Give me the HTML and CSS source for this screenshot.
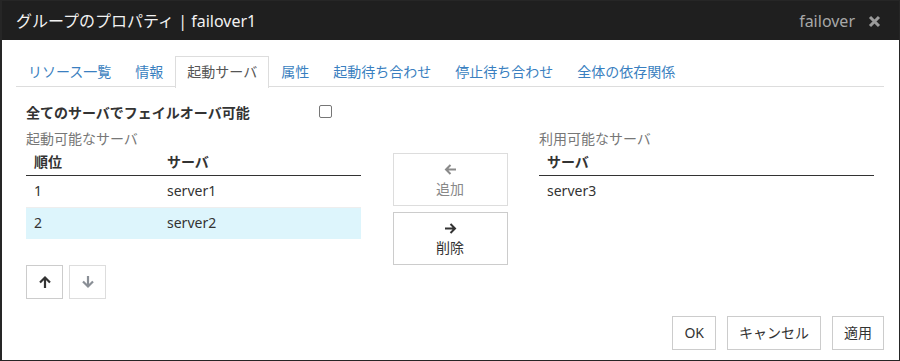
FILE: index.html
```html
<!DOCTYPE html>
<html lang="ja">
<head>
<meta charset="utf-8">
<link rel="stylesheet" href="styles.css">
</head>
<body>
<div class="dialog">
  <div class="titlebar">
    <span class="title">グループのプロパティ | failover1</span>
    <span class="title-right">
      <span class="grp">failover</span>
      <svg class="close" width="13" height="13" viewBox="0 0 13 13"><path d="M2 2 L11 11 M11 2 L2 11" stroke="#9a9a9a" stroke-width="3" stroke-linecap="butt"/></svg>
    </span>
  </div>
  <div class="body">
    <ul class="tabs">
      <li class="tab">リソース一覧</li>
      <li class="tab">情報</li>
      <li class="tab active">起動サーバ</li>
      <li class="tab">属性</li>
      <li class="tab">起動待ち合わせ</li>
      <li class="tab">停止待ち合わせ</li>
      <li class="tab">全体の依存関係</li>
    </ul>
    <div class="content">
      <div class="checkrow">
        <span class="checklabel">全てのサーバでフェイルオーバ可能</span>
        <span class="checkbox"></span>
      </div>
      <div class="cols">
        <div class="col-side">
          <div class="caption">起動可能なサーバ</div>
          <table class="grid">
            <thead>
              <tr><th class="c-order">順位</th><th>サーバ</th></tr>
            </thead>
            <tbody>
              <tr><td class="c-order">1</td><td>server1</td></tr>
              <tr class="selected"><td class="c-order">2</td><td>server2</td></tr>
            </tbody>
          </table>
          <div class="updown">
            <button class="sq">
              <svg width="14" height="14" viewBox="0 0 14 14"><path d="M7 13 V2.5 M2 7.5 L7 2.5 L12 7.5" fill="none" stroke="#333" stroke-width="2.2"/></svg>
            </button>
            <button class="sq disabled">
              <svg width="14" height="14" viewBox="0 0 14 14"><path d="M7 1 V11.5 M2 6.5 L7 11.5 L12 6.5" fill="none" stroke="#8a8f96" stroke-width="2.2"/></svg>
            </button>
          </div>
        </div>
        <div class="col-mid">
          <button class="move disabled">
            <svg width="13" height="13" viewBox="0 0 13 13"><path d="M12 6.5 H2 M6.5 2 L2 6.5 L6.5 11" fill="none" stroke="#8a8a8a" stroke-width="2"/></svg>
            <span>追加</span>
          </button>
          <button class="move">
            <svg width="13" height="13" viewBox="0 0 13 13"><path d="M1 6.5 H11 M6.5 2 L11 6.5 L6.5 11" fill="none" stroke="#333" stroke-width="2"/></svg>
            <span>削除</span>
          </button>
        </div>
        <div class="col-side">
          <div class="caption">利用可能なサーバ</div>
          <table class="grid">
            <thead>
              <tr><th>サーバ</th></tr>
            </thead>
            <tbody>
              <tr><td>server3</td></tr>
            </tbody>
          </table>
        </div>
      </div>
    </div>
    <div class="footer">
      <button class="btn">OK</button>
      <button class="btn">キャンセル</button>
      <button class="btn">適用</button>
    </div>
  </div>
</div>
</body>
</html>
```

FILE: styles.css
```css
* { box-sizing: border-box; }
html, body { margin: 0; padding: 0; background: #fff; }
body {
  font-family: "Noto Sans", "Noto Sans CJK JP", sans-serif;
  font-size: 14px;
  color: #333;
}
.dialog {
  width: 900px;
  height: 361px;
  border: 1px solid #262626;
  border-left-width: 2px;
  display: flex;
  flex-direction: column;
  background: #fff;
}
.titlebar {
  height: 39px;
  background: #1f1f1f;
  display: flex;
  align-items: center;
  justify-content: space-between;
  padding: 0 18px 0 14px;
  color: #f2f2f2;
  font-size: 16px;
  line-height: 20px;
}
.title-right { display: flex; align-items: center; gap: 13px; }
.grp { color: #a8a8a8; font-size: 16px; }
.close { display: block; margin-top: 1px; }
.body {
  flex: 1;
  display: flex;
  flex-direction: column;
  padding: 16px 15px 10px 14px;
}
.tabs {
  list-style: none;
  margin: 0;
  padding: 0;
  display: flex;
  border-bottom: 1px solid #dddddd;
  height: 31px;
}
.tab {
  padding: 0 11px;
  margin-right: 0;
  border: 1px solid transparent;
  border-bottom: none;
  color: #3a7fc0;
  line-height: 30px;
  height: 31px;
}
.active {
  color: #555;
  border-color: #dddddd;
  background: #fff;
  height: 32px;
  margin-bottom: -1px;
}
.content { padding: 0 10px; }
.checkrow {
  display: flex;
  align-items: center;
  margin-top: 16px;
  height: 20px;
}
.checklabel {
  font-weight: bold;
  width: 293px;
  line-height: 20px;
}
.checkbox {
  width: 13px;
  height: 13px;
  border: 1px solid #767676;
  border-radius: 2px;
  margin-top: -3px;
}
.cols {
  display: flex;
  justify-content: space-between;
  margin-top: 6px;
}
.col-side { width: 335px; }
.col-mid {
  width: 115px;
  padding-top: 24px;
  display: flex;
  flex-direction: column;
  gap: 6px;
}
.caption {
  color: #777;
  line-height: 20px;
  height: 20px;
}
.grid {
  width: 100%;
  border-collapse: collapse;
}
.grid th {
  text-align: left;
  font-weight: bold;
  padding: 0 8px;
  height: 26px;
  line-height: 20px;
  border-bottom: 1px solid #333;
  vertical-align: middle;
  padding-top: 1px;
}
.grid td {
  padding: 0 8px;
  height: 32px;
  line-height: 20px;
  border-bottom: 1px solid #eeeeee;
  vertical-align: middle;
}
.grid tr.selected td { background: #ddf5fc; border-bottom-color: #ddf5fc; }
.grid .c-order { width: 133px; }
.grid tbody tr:last-child td { border-bottom: none; }
button {
  font-family: inherit;
  font-size: 14px;
  color: #333;
  background: #fff;
  border: 1px solid #cccccc;
  border-radius: 0;
  padding: 0;
  margin: 0;
  cursor: pointer;
}
.updown {
  display: flex;
  gap: 6px;
  margin-top: 26px;
}
.sq {
  width: 37px;
  height: 34px;
  display: flex;
  align-items: center;
  justify-content: center;
}
.sq.disabled { border-color: #dddddd; }
.move {
  width: 115px;
  height: 53px;
  display: flex;
  flex-direction: column;
  align-items: center;
  justify-content: center;
  gap: 3px;
  line-height: 20px;
}
.move svg { display: block; margin-top: 2px; }
.move.disabled { color: #888; border-color: #dddddd; }
.footer {
  margin-top: auto;
  display: flex;
  justify-content: flex-end;
  gap: 11px;
}
.btn {
  height: 34px;
  padding: 0 11px;
  line-height: 20px;
}
```
